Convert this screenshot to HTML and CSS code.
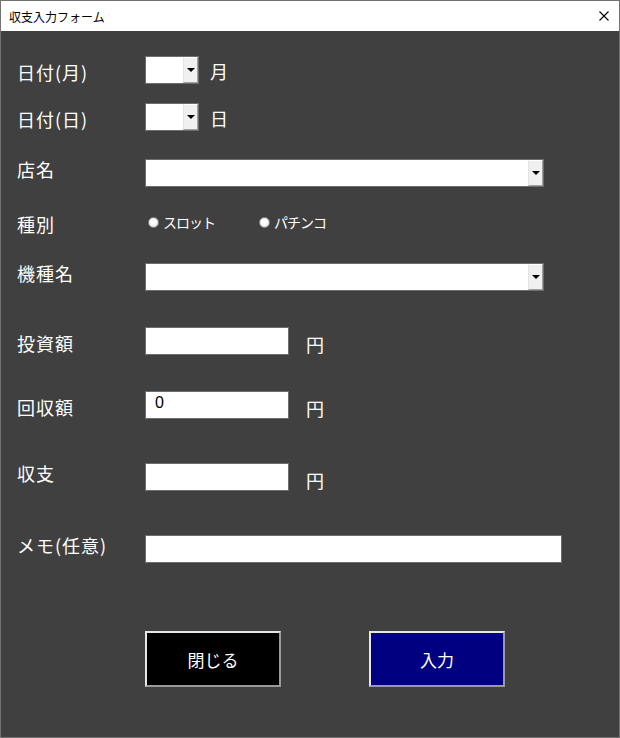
FILE: index.html
```html
<!DOCTYPE html>
<html lang="ja">
<head>
  <meta charset="UTF-8" />
  <title>収支入力フォーム</title>
  <link rel="stylesheet" href="styles.css">
</head>
<body>

<div class="window">
  <div class="titlebar">
    <span class="title">収支入力フォーム</span>
    <svg class="close" width="10" height="10" viewBox="0 0 10 10">
      <path d="M0.5 0.5 L9.5 9.5 M9.5 0.5 L0.5 9.5" stroke="#000" stroke-width="1.1" fill="none" />
    </svg>
  </div>

  <div class="form">
    <div class="row row-month">
      <span class="label label-low">日付(月)</span>
      <div class="combo combo-small"><span class="field"></span><span class="drop"></span></div>
      <span class="unit unit-date">月</span>
    </div>

    <div class="row row-day">
      <span class="label label-low">日付(日)</span>
      <div class="combo combo-small"><span class="field"></span><span class="drop"></span></div>
      <span class="unit unit-date">日</span>
    </div>

    <div class="row row-shop">
      <span class="label">店名</span>
      <div class="combo combo-wide"><span class="field"></span><span class="drop"></span></div>
    </div>

    <div class="row row-kind">
      <span class="label label-low">種別</span>
      <div class="radios">
        <label class="radio"><span class="dot"></span>スロット</label>
        <label class="radio"><span class="dot"></span>パチンコ</label>
      </div>
    </div>

    <div class="row row-model">
      <span class="label">機種名</span>
      <div class="combo combo-wide"><span class="field"></span><span class="drop"></span></div>
    </div>

    <div class="row row-invest">
      <span class="label label-low">投資額</span>
      <div class="textbox"></div>
      <span class="unit">円</span>
    </div>

    <div class="row row-return">
      <span class="label label-low">回収額</span>
      <div class="textbox">0</div>
      <span class="unit">円</span>
    </div>

    <div class="row row-balance">
      <span class="label">収支</span>
      <div class="textbox"></div>
      <span class="unit">円</span>
    </div>

    <div class="row row-memo">
      <span class="label">メモ(任意)</span>
      <div class="textbox textbox-memo"></div>
    </div>

    <div class="buttons">
      <button class="btn btn-close">閉じる</button>
      <button class="btn btn-enter">入力</button>
    </div>
  </div>
</div>

</body>
</html>
```

FILE: styles.css
```css
body {
  margin: 0;
  font-family: "Noto Sans CJK JP", sans-serif;
}
.window {
  width: 620px;
  height: 738px;
  box-sizing: border-box;
  border: 1px solid #727272;
  background-color: #404040;
}
.titlebar {
  height: 30px;
  background-color: #fff;
  display: flex;
  align-items: center;
  justify-content: space-between;
  padding: 0 10px 0 8px;
}
.title {
  font-size: 12px;
  color: #000;
}
.close {
  display: block;
}

/* Formular */
.form {
  padding: 25px 0 0 16px;
}
.row {
  display: flex;
  align-items: flex-start;
  height: 28px;
}
.row-day { margin-top: 19px; }
.row-shop { margin-top: 28px; }
.row-kind { margin-top: 21px; }
.row-model { margin-top: 27px; }
.row-invest { margin-top: 36px; }
.row-return { margin-top: 36px; }
.row-balance { margin-top: 44px; }
.row-memo { margin-top: 44px; }

.label {
  width: 128px;
  flex: none;
  color: #fff;
  font-size: 18px;
  line-height: 20px;
  letter-spacing: 1px;
}
.label-low {
  padding-top: 6px;
}
.unit {
  color: #fff;
  font-size: 18px;
  line-height: 20px;
  padding-top: 7px;
  margin-left: 17px;
}
.unit-date {
  padding-top: 5px;
  margin-left: 11px;
}

/* Kombinationsfeld */
.combo {
  display: flex;
  height: 28px;
  box-sizing: border-box;
  border: 1px solid #6d6d6d;
  background-color: #fff;
}
.combo-small { width: 54px; }
.combo-wide { width: 399px; }
.combo .field {
  flex: 1;
}
.drop {
  width: 15px;
  box-sizing: border-box;
  background-color: #f0f0f0;
  border: 1px solid;
  border-color: #fff #a0a0a0 #a0a0a0 #e3e3e3;
  display: flex;
  align-items: center;
  justify-content: center;
}
.drop::after {
  content: "";
  border-left: 4px solid transparent;
  border-right: 4px solid transparent;
  border-top: 4px solid #000;
}

/* Textfeld */
.textbox {
  width: 144px;
  height: 28px;
  box-sizing: border-box;
  border: 1px solid #6d6d6d;
  background-color: #fff;
  font-family: "Liberation Sans", sans-serif;
  font-size: 16px;
  line-height: 20px;
  padding: 1px 0 0 9px;
  color: #000;
}
.textbox-memo {
  width: 417px;
}

/* Optionsfelder */
.radios {
  display: flex;
  align-items: center;
  height: 28px;
  padding-left: 3px;
}
.radio {
  width: 111px;
  display: flex;
  align-items: center;
  color: #fff;
  font-size: 14px;
  letter-spacing: -1px;
}
.dot {
  width: 11px;
  height: 11px;
  box-sizing: border-box;
  border-radius: 50%;
  border: 1px solid #8a8a8a;
  background: radial-gradient(circle at 45% 45%, #fff 35%, #d0d0d0 100%);
  margin-right: 4px;
}

/* Schaltflächen */
.buttons {
  display: flex;
  gap: 88px;
  margin-top: 68px;
  padding-left: 128px;
}
.btn {
  width: 136px;
  height: 56px;
  border: 2px solid;
  border-color: #e6e6e6 #9a9a9a #9a9a9a #e6e6e6;
  color: #fff;
  font-family: "Noto Sans CJK JP", sans-serif;
  font-size: 17px;
  cursor: pointer;
}
.btn-close {
  background-color: #000;
}
.btn-enter {
  background-color: #000080;
}
```
